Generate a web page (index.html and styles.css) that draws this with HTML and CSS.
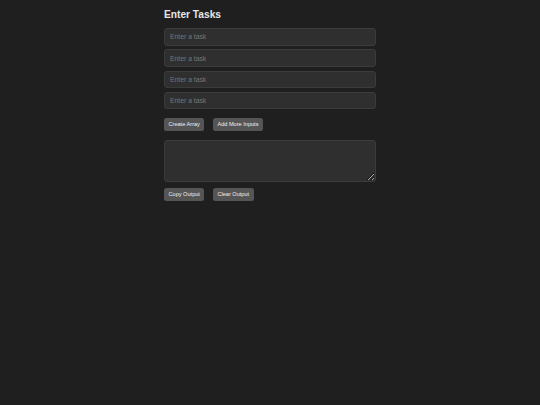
FILE: index.html
```html
<!DOCTYPE html>
<html>
<head>
<meta charset="utf-8">
<link rel="stylesheet" href="styles.css">
</head>
<body>
<div class="container">
  <h2 class="title">Enter Tasks</h2>
  <div class="inputs">
    <input class="task" type="text" placeholder="Enter a task">
    <input class="task" type="text" placeholder="Enter a task">
    <input class="task" type="text" placeholder="Enter a task">
    <input class="task" type="text" placeholder="Enter a task">
  </div>
  <div class="actions">
    <button class="btn">Create Array</button>
    <button class="btn">Add More Inputs</button>
  </div>
  <textarea class="output"></textarea>
  <div class="actions">
    <button class="btn">Copy Output</button>
    <button class="btn">Clear Output</button>
  </div>
</div>
</body>
</html>
```
FILE: styles.css
```css
html, body {
  margin: 0;
  padding: 0;
  background: #1f1f1f;
  font-family: "Liberation Sans", Arial, sans-serif;
  color: #e0e0e0;
}
.container {
  width: 212px;
  margin: 0 auto;
  padding-top: 8.8px;
}
.title {
  margin: 0 0 8px 0;
  font-size: 10.2px;
  line-height: 11.5px;
  font-weight: bold;
  color: #e6e6e6;
}
.inputs {
  display: flex;
  flex-direction: column;
  gap: 3.9px;
}
.task {
  box-sizing: border-box;
  width: 100%;
  height: 17.3px;
  margin: 0;
  padding: 0 5px;
  background: #2f2f2f;
  border: 1px solid #3b3b3b;
  border-radius: 3px;
  color: #ddd;
  font-family: "Liberation Sans", Arial, sans-serif;
  font-size: 6.8px;
  outline: none;
}
.task::placeholder {
  color: #777;
}
.actions {
  display: flex;
  gap: 8.5px;
  margin-top: 8.5px;
}
.btn {
  box-sizing: border-box;
  height: 13.3px;
  margin: 0;
  padding: 0 4.5px;
  background: #555;
  border: none;
  border-radius: 2.5px;
  color: #f0f0f0;
  font-family: "Liberation Sans", Arial, sans-serif;
  font-size: 5.6px;
  line-height: 13.3px;
}
.output {
  display: block;
  box-sizing: border-box;
  width: 100%;
  height: 41.7px;
  margin: 9.3px 0 0 0;
  padding: 4px;
  background: #2f2f2f;
  border: 1px solid #3b3b3b;
  border-radius: 3px;
  color: #ddd;
  color-scheme: dark;
  outline: none;
}
.output + .actions {
  margin-top: 5.8px;
}
```
